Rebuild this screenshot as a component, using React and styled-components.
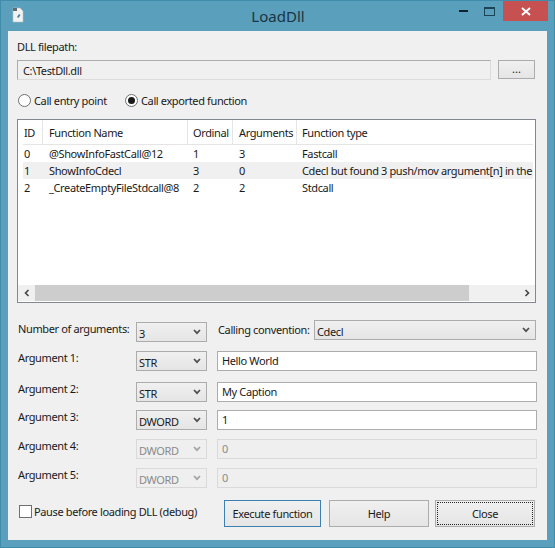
import React from "react";
import styled, { createGlobalStyle } from "styled-components";

const Global = createGlobalStyle`
  html, body { margin: 0; padding: 0; }
  body { font-family: "Noto Sans", "Open Sans", sans-serif; font-size: 11px; letter-spacing: -0.37px; color: #1a1a1a; }
  * { box-sizing: border-box; }
`;

const Win = styled.div`
  width: 555px; height: 548px; background: #5a9fbb;
  border: 1px solid #3f8cab; display: flex; flex-direction: column; overflow: hidden;
`;
const TitleBar = styled.div`
  height: 30px; flex: none; display: flex; align-items: flex-start; padding-left: 9px; position: relative;
`;
const Title = styled.div`
  position: absolute; left: 1px; right: 0; top: 5px; text-align: center; font-size: 15px; line-height: 20px; color: #1a3542;
  letter-spacing: 0;
`;
const AppIcon = styled.svg`
  width: 16px; height: 16px; margin-top: 6px; display: block;
`;
const Controls = styled.div`
  position: absolute; right: 6px; top: 0; display: flex; align-items: flex-start;
`;
const CtlBtn = styled.div`
  width: ${p => p.$w}px; height: 20px; display: flex; align-items: center; justify-content: center;
  background: ${p => p.$close ? "#c75050" : "transparent"};
`;
const Client = styled.div`
  flex: 1; margin: 0 7px 7px; background: #f0f0f0; padding: 9px 9px 0 9px; display: flex; flex-direction: column;
`;
const Label = styled.div`
  font-size: 11px; line-height: 14px; white-space: nowrap; width: ${p => p.$w ? p.$w + "px" : "auto"}; flex: none;
`;
const PathRow = styled.div`
  display: flex; margin-top: 6px; height: 20px; align-items: flex-start;
`;
const PathInput = styled.input`
  width: 474px; height: 20px; border: 1px solid #acacac; border-right-color: #dcdcdc; border-bottom-color: #dcdcdc;
  background: #f0f0f0; font: inherit; letter-spacing: inherit; color: #1a1a1a; padding: 0 5px; outline: none;
`;
const SmallBtn = styled.button`
  width: 37px; height: 19px; margin-left: 7px; border: 1px solid #acacac; padding: 0 0 3px;
  background: linear-gradient(#f0f0f0, #e5e5e5); font: inherit; color: #1a1a1a;
`;
const RadioRow = styled.div`
  display: flex; margin-top: 12px; height: 16px; align-items: center; padding-left: 1px;
`;
const RadioItem = styled.div`
  display: flex; align-items: center; gap: 3px; width: ${p => p.$w}px; flex: none; white-space: nowrap;
`;
const RadioMark = styled.span`
  width: 13px; height: 13px; border-radius: 50%; border: 1px solid #707070; background: #fff; flex: none;
  display: flex; align-items: center; justify-content: center;
  &::after { content: ""; width: 7px; height: 7px; border-radius: 50%; background: ${p => p.$on ? "#1a1a1a" : "transparent"}; }
`;
const Table = styled.div`
  margin-top: 11px; height: 184px; width: 519px; border: 1px solid #828790; background: #fff;
  display: flex; flex-direction: column; position: relative; padding: 0 2px 1px 5px;
`;
const Head = styled.div`
  display: grid; grid-template-columns: 20px 145px 45px 64px 1fr; height: 25px; border-bottom: 1px solid #e5e5e5; flex: none;
`;
const HeadCell = styled.div`
  line-height: 25px; white-space: nowrap; border-right: 1px solid ${p => p.$last ? "transparent" : "#e5e5e5"};
  padding-left: ${p => p.$pad}px;
`;
const Rows = styled.div`
  flex: 1; overflow: hidden;
`;
const DataRow = styled.div`
  display: grid; grid-template-columns: 20px 145px 45px 64px 1fr; height: 17px; line-height: 17px;
  background: ${p => p.$alt ? "#f0f0f0" : "transparent"};
`;
const Cell = styled.div`
  padding-left: ${p => p.$pad}px; white-space: nowrap;
`;
const Scrollbar = styled.div`
  flex: none; height: 16px; margin: 0 -2px 0 -5px; width: 517px; background: #f0f0f0; display: flex; align-items: stretch;
`;
const ScrollBtn = styled.div`
  width: 17px; flex: none; display: flex; align-items: center; justify-content: center;
`;
const Thumb = styled.div`
  width: 434px; background: #cdcdcd; flex: none;
`;
const ScrollGap = styled.div`
  flex: 1;
`;
const Row = styled.div`
  display: flex; align-items: flex-start; margin-top: ${p => p.$mt}px; padding-left: 1px;
`;
const Combo = styled.div`
  width: ${p => p.$w}px; height: 20px; flex: none; position: relative; display: flex; align-items: center;
  margin-top: ${p => p.$mt || 0}px; padding: 2px 0 0 2px;
  border: 1px solid ${p => p.$off ? "#d9d9d9" : "#acacac"};
  background: ${p => p.$off ? "#efefef" : "linear-gradient(#f0f0f0, #e5e5e5)"};
  color: ${p => p.$off ? "#8a8a8a" : "#1a1a1a"};
`;
const Chevron = styled.svg`
  position: absolute; right: 5px; top: 6px; width: 8px; height: 6px;
`;
const ArgInput = styled.input`
  width: 320px; height: 20px; margin-left: 10px; flex: none; font: inherit; letter-spacing: inherit; padding: 0 4px 1px; outline: none;
  border: 1px solid ${p => p.disabled ? "#d9d9d9" : "#acacac"};
  background: ${p => p.disabled ? "#efefef" : "#fff"};
  color: ${p => p.disabled ? "#8a8a8a" : "#1a1a1a"};
`;
const RowLabel = styled(Label)`
  margin-top: ${p => p.$mt}px;
  margin-left: ${p => p.$ml || 0}px;
`;
const Footer = styled.div`
  display: flex; align-items: flex-start; margin-top: 12px; height: 27px;
`;
const CheckWrap = styled.div`
  display: flex; align-items: center; gap: 2px; width: 207px; flex: none; height: 17px; padding-left: 2px; margin-top: 3px; white-space: nowrap;
`;
const CheckBox = styled.span`
  width: 13px; height: 13px; background: #fff; border: 1px solid #707070; flex: none;
`;
const DlgBtn = styled.button`
  width: ${p => p.$w}px; height: 27px; margin-left: ${p => p.$ml}px; flex: none; font: inherit; letter-spacing: inherit; color: #1a1a1a; padding: 0;
  border: 1px solid ${p => p.$def ? "#3c7fb1" : "#acacac"};
  background: linear-gradient(#f0f0f0, #e5e5e5);
  position: relative;
`;
const FocusRing = styled.span`
  position: absolute; inset: 1px; border: 1px dotted #222; pointer-events: none;
`;

const Chev = () => (
  <Chevron viewBox="0 0 8 6"><path d="M1 1 L4 4.2 L7 1" fill="none" stroke="currentColor" strokeWidth="1.7" opacity=".75" /></Chevron>
);

const data = [
  ["0", "@ShowInfoFastCall@12", "1", "3", "Fastcall"],
  ["1", "ShowInfoCdecl", "3", "0", "Cdecl but found 3 push/mov argument[n] in the"],
  ["2", "_CreateEmptyFileStdcall@8", "2", "2", "Stdcall"],
];
const args = [
  { n: 1, t: "STR", v: "Hello World", mt: 9 },
  { n: 2, t: "STR", v: "My Caption", mt: 11 },
  { n: 3, t: "DWORD", v: "1", mt: 8 },
  { n: 4, t: "DWORD", v: "0", mt: 9, off: true },
  { n: 5, t: "DWORD", v: "0", mt: 9, off: true },
];

export default function App() {
  return (
    <Win>
      <Global />
      <TitleBar>
        <AppIcon viewBox="0 0 16 16">
          <path d="M3 1h7l3 3v11H3z" fill="#f1f3f3" stroke="#b9c3c6" strokeWidth=".6" />
          <path d="M3 1h4v3H3z" fill="#5f6b70" />
          <path d="M7 10l2-3 1.5 1-2 3z" fill="#4f7d9a" />
        </AppIcon>
        <Title>LoadDll</Title>
        <Controls>
          <CtlBtn $w={26}><svg width="9" height="2"><rect width="9" height="2" fill="#10222b" /></svg></CtlBtn>
          <CtlBtn $w={27}><svg width="11" height="9"><rect x=".5" y=".5" width="10" height="8" fill="none" stroke="#1d4456" /><rect x="0" y="0" width="11" height="2" fill="#1d4456" /></svg></CtlBtn>
          <CtlBtn $w={45} $close><svg width="10" height="9"><path d="M1 1 L9 8 M9 1 L1 8" stroke="#fff" strokeWidth="2" /></svg></CtlBtn>
        </Controls>
      </TitleBar>
      <Client>
        <Label>DLL filepath:</Label>
        <PathRow>
          <PathInput readOnly value="C:\TestDll.dll" />
          <SmallBtn>...</SmallBtn>
        </PathRow>
        <RadioRow>
          <RadioItem $w={107}><RadioMark />Call entry point</RadioItem>
          <RadioItem $w={140}><RadioMark $on />Call exported function</RadioItem>
        </RadioRow>
        <Table>
          <Head>
            <HeadCell $pad={1}>ID</HeadCell>
            <HeadCell $pad={6}>Function Name</HeadCell>
            <HeadCell $pad={5}>Ordinal</HeadCell>
            <HeadCell $pad={6}>Arguments</HeadCell>
            <HeadCell $pad={5} $last>Function type</HeadCell>
          </Head>
          <Rows>
            {data.map((r, i) => (
              <DataRow key={r[0]} $alt={i === 1}>
                <Cell $pad={1}>{r[0]}</Cell>
                <Cell $pad={6}>{r[1]}</Cell>
                <Cell $pad={5}>{r[2]}</Cell>
                <Cell $pad={6}>{r[3]}</Cell>
                <Cell $pad={5}>{r[4]}</Cell>
              </DataRow>
            ))}
          </Rows>
          <Scrollbar>
            <ScrollBtn><svg width="6" height="8"><path d="M4.5 1 L1.5 4 L4.5 7" fill="none" stroke="#444" strokeWidth="1.6" /></svg></ScrollBtn>
            <Thumb />
            <ScrollGap />
            <ScrollBtn><svg width="6" height="8"><path d="M1.5 1 L4.5 4 L1.5 7" fill="none" stroke="#444" strokeWidth="1.6" /></svg></ScrollBtn>
          </Scrollbar>
        </Table>
        <Row $mt={17}>
          <RowLabel $w={118} $mt={2}>Number of arguments:</RowLabel>
          <Combo $w={71} $mt={2}>3<Chev /></Combo>
          <RowLabel $w={96} $mt={3} $ml={11}>Calling convention:</RowLabel>
          <Combo $w={222}>Cdecl<Chev /></Combo>
        </Row>
        {args.map(a => (
          <Row key={a.n} $mt={a.mt}>
            <RowLabel $w={118} $mt={0}>Argument {a.n}:</RowLabel>
            <Combo $w={71} $off={a.off}>{a.t}<Chev /></Combo>
            <ArgInput readOnly value={a.v} disabled={a.off} />
          </Row>
        ))}
        <Footer>
          <CheckWrap><CheckBox />Pause before loading DLL (debug)</CheckWrap>
          <DlgBtn $w={97} $ml={0} $def>Execute function</DlgBtn>
          <DlgBtn $w={100} $ml={8}>Help</DlgBtn>
          <DlgBtn $w={100} $ml={6}>Close<FocusRing /></DlgBtn>
        </Footer>
      </Client>
    </Win>
  );
}
